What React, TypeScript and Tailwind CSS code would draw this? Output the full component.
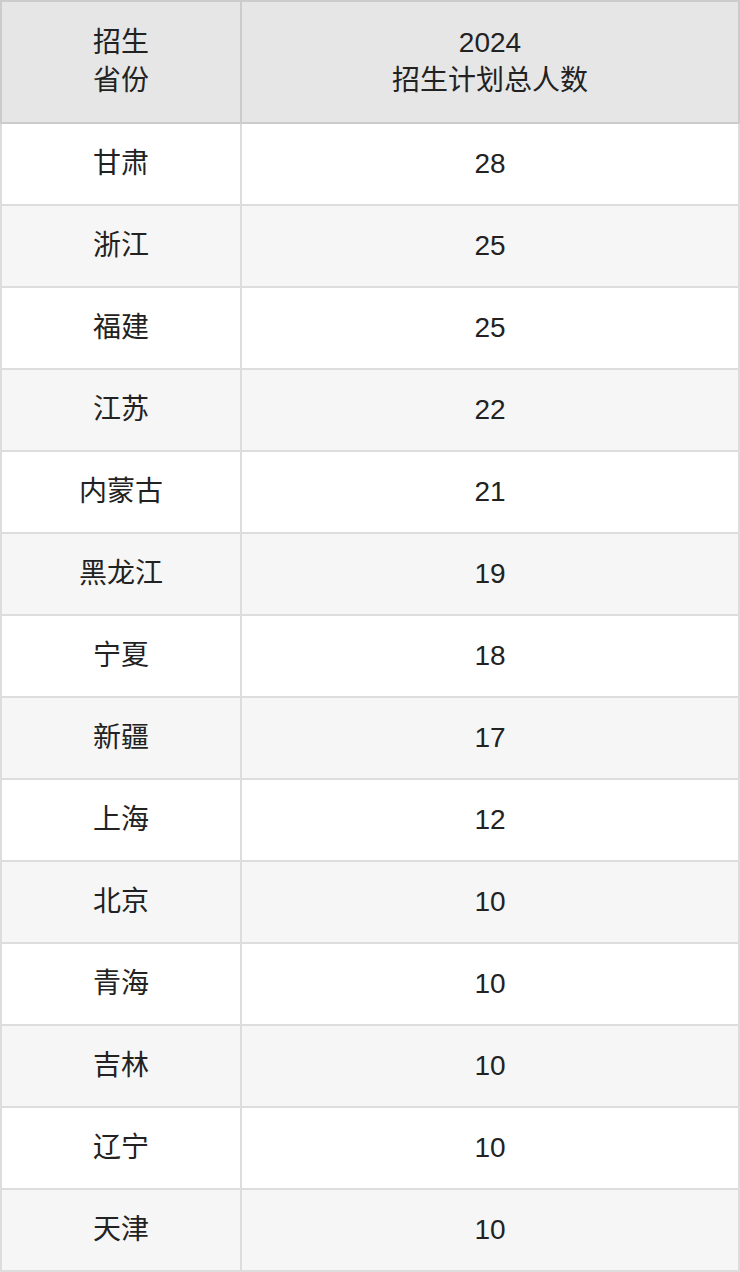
export default function App() {
  const rows = [
    { province: "甘肃", count: 28 },
    { province: "浙江", count: 25 },
    { province: "福建", count: 25 },
    { province: "江苏", count: 22 },
    { province: "内蒙古", count: 21 },
    { province: "黑龙江", count: 19 },
    { province: "宁夏", count: 18 },
    { province: "新疆", count: 17 },
    { province: "上海", count: 12 },
    { province: "北京", count: 10 },
    { province: "青海", count: 10 },
    { province: "吉林", count: 10 },
    { province: "辽宁", count: 10 },
    { province: "天津", count: 10 },
  ];

  return (
    <div
      className="w-[740px] bg-white text-[#222] text-[28px] leading-[38px]"
      style={{ fontFamily: '"Liberation Sans", "Noto Sans CJK SC", sans-serif' }}
    >
      {/* Header */}
      <div className="grid grid-cols-[242px_1fr] h-[124px] bg-[#e6e6e6]">
        <div className="flex flex-col items-center justify-center border-2 border-[#ccc] text-center">
          <span>招生</span>
          <span>省份</span>
        </div>
        <div className="flex flex-col items-center justify-center border-y-2 border-r-2 border-[#ccc] text-center">
          <span>2024</span>
          <span>招生计划总人数</span>
        </div>
      </div>

      {/* Body */}
      {rows.map((row, index) => (
        <div
          key={index}
          className={`grid grid-cols-[242px_1fr] h-[82px] ${
            index % 2 === 0 ? "bg-white" : "bg-[#f6f6f6]"
          }`}
        >
          <div className="flex items-center justify-center border-x-2 border-b-2 border-[#ddd]">
            {row.province}
          </div>
          <div className="flex items-center justify-center border-r-2 border-b-2 border-[#ddd]">
            {row.count}
          </div>
        </div>
      ))}
    </div>
  );
}
